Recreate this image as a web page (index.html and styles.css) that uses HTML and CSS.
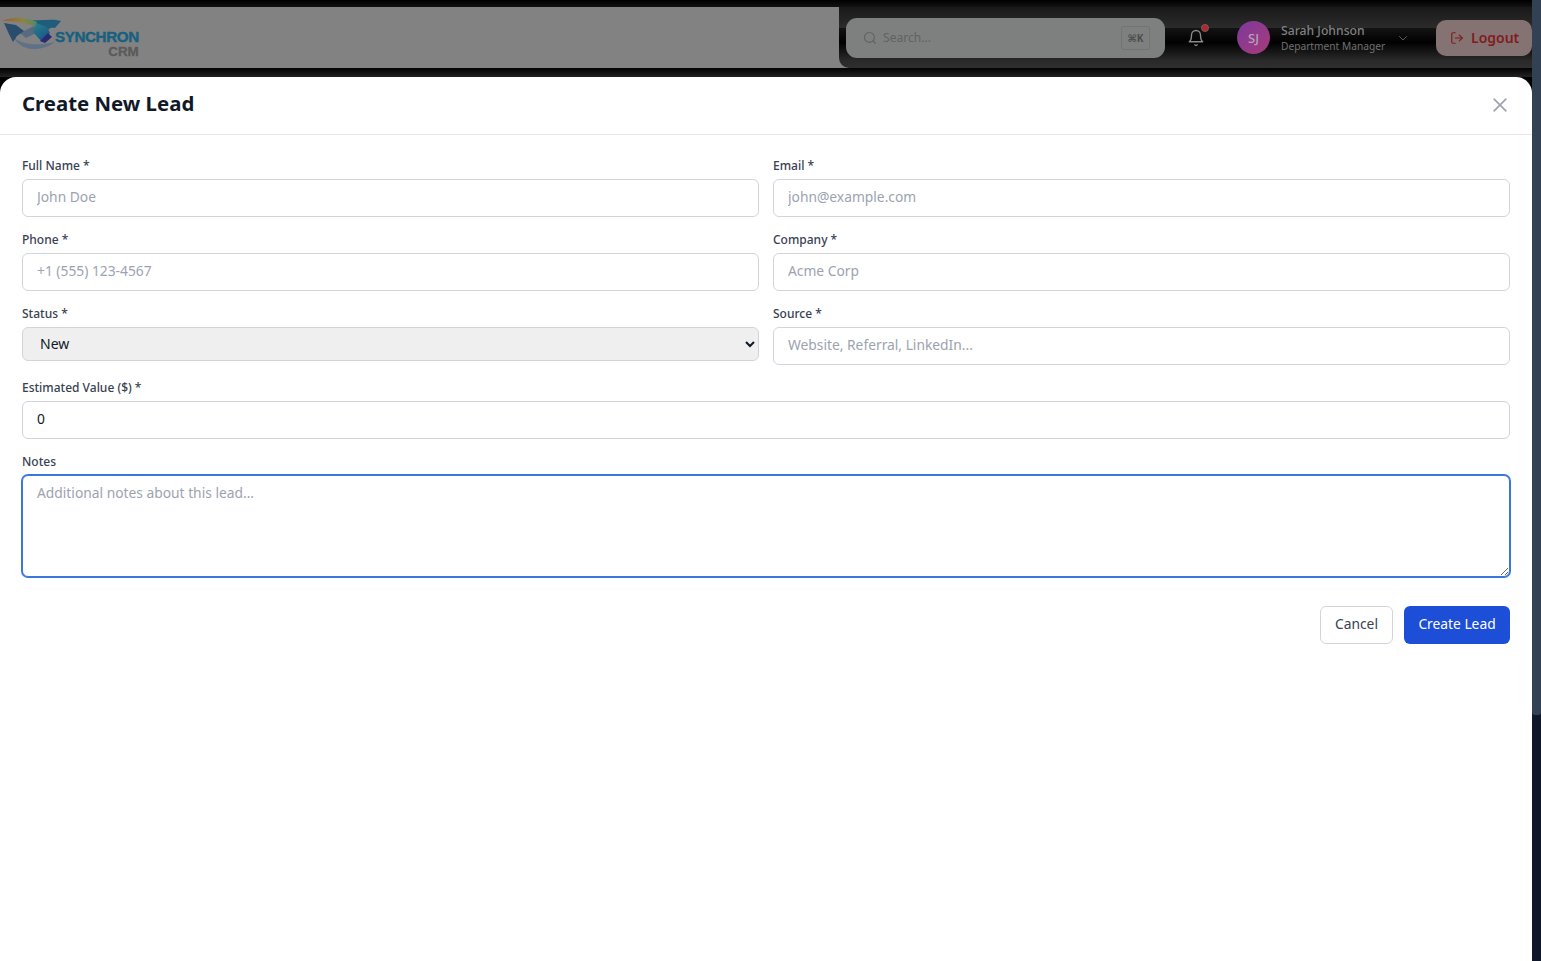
FILE: index.html
```html
<!DOCTYPE html>
<html lang="en">
<head>
<meta charset="utf-8">
<title>Create New Lead</title>
<link rel="stylesheet" href="styles.css">
</head>
<body>
<div class="app">
  <div class="main">
    <div class="strip strip-top"></div>
    <header class="header">
      <div class="brand">
        <svg class="logo-mark" width="62" height="38" viewBox="0 15 62 38">
          <defs>
            <linearGradient id="arc" x1="0" y1="0" x2="1" y2="0">
              <stop offset="0" stop-color="#9a5f2c"/>
              <stop offset="0.6" stop-color="#8c8442"/>
              <stop offset="1" stop-color="#4f8a68"/>
            </linearGradient>
            <linearGradient id="band" x1="0" y1="0" x2="0.6" y2="1">
              <stop offset="0" stop-color="#2f7f8c"/>
              <stop offset="1" stop-color="#15588a"/>
            </linearGradient>
          </defs>
          <path d="M14 38 C24 45 38 46 55 42 C42 52 22 52 14 38Z" fill="#5f7186"/>
          <path d="M20 33 L36 25 L40 31 L26 38Z" fill="#566a82"/>
          <path d="M4 23 L16 25 L24 31 L17 36 L13 42 L8 32Z" fill="#2a4d6e"/>
          <path d="M33 20 C42 21 52 18 61 21 L55 28 C49 27 47 30 48 34 L38 30Z" fill="#1f5d7a"/>
          <path d="M36 23 L47 27 L50 33 L42 42 L33 32Z" fill="url(#band)"/>
          <path d="M48 33 L52 37 L45 43 L40 41Z" fill="#2c2a6e"/>
          <path d="M2 21 C10 17 25 16 37 22 L35 27 C26 22 14 21 2 21Z" fill="url(#arc)"/>
        </svg>
        <div class="wordmark">
          <span class="word-top">SYNCHRON</span>
          <span class="word-bottom">CRM</span>
        </div>
      </div>
      <div class="toolbar">
        <div class="search">
          <svg class="search-icon" width="14" height="14" viewBox="0 0 24 24" fill="none" stroke="#5f6362" stroke-width="2" stroke-linecap="round"><circle cx="11" cy="11" r="8.5"/><path d="M21 21l-3.8-3.8"/></svg>
          <span class="search-text">Search...</span>
          <kbd class="kbd">⌘K</kbd>
        </div>
        <div class="bell">
          <svg width="18" height="18" viewBox="0 0 24 24" fill="none" stroke="#8a8a8a" stroke-width="1.8" stroke-linecap="round" stroke-linejoin="round"><path d="M6 8a6 6 0 0 1 12 0c0 7 3 9 3 9H3s3-2 3-9"/><path d="M10.3 21a2 2 0 0 0 3.4 0"/></svg>
          <span class="dot"></span>
        </div>
        <div class="user">
          <div class="avatar">SJ</div>
          <div class="user-info">
            <span class="user-name">Sarah Johnson</span>
            <span class="user-role">Department Manager</span>
          </div>
          <svg class="chev" width="12" height="12" viewBox="0 0 24 24" fill="none" stroke="#5b5b5b" stroke-width="2" stroke-linecap="round" stroke-linejoin="round"><path d="M5 9l7 7 7-7"/></svg>
        </div>
        <button class="logout" type="button">
          <svg width="14" height="14" viewBox="0 0 24 24" fill="none" stroke="#7f1d1d" stroke-width="2" stroke-linecap="round" stroke-linejoin="round"><path d="M9 21H5a2 2 0 0 1-2-2V5a2 2 0 0 1 2-2h4"/><path d="M16 17l5-5-5-5"/><path d="M21 12H9"/></svg>
          <span>Logout</span>
        </button>
      </div>
    </header>
    <div class="strip strip-bottom"></div>
    <section class="modal">
      <div class="modal-head">
        <h2 class="modal-title">Create New Lead</h2>
        <svg class="close" width="20" height="20" viewBox="0 0 24 24" fill="none" stroke="#9ca3af" stroke-width="2" stroke-linecap="round"><path d="M5 5l14 14M19 5L5 19"/></svg>
      </div>
      <form class="form">
        <div class="grid">
          <label class="field"><span class="label">Full Name *</span><input class="input" placeholder="John Doe"></label>
          <label class="field"><span class="label">Email *</span><input class="input" placeholder="john@example.com"></label>
          <label class="field"><span class="label">Phone *</span><input class="input" placeholder="+1 (555) 123-4567"></label>
          <label class="field"><span class="label">Company *</span><input class="input" placeholder="Acme Corp"></label>
          <label class="field"><span class="label">Status *</span><select class="select"><option>New</option></select></label>
          <label class="field"><span class="label">Source *</span><input class="input" placeholder="Website, Referral, LinkedIn..."></label>
          <label class="field wide"><span class="label">Estimated Value ($) *</span><input class="input" value="0"></label>
          <label class="field wide"><span class="label">Notes</span><textarea class="textarea" placeholder="Additional notes about this lead..."></textarea></label>
        </div>
        <div class="actions">
          <button class="btn btn-cancel" type="button">Cancel</button>
          <button class="btn btn-primary" type="button">Create Lead</button>
        </div>
      </form>
    </section>
  </div>
  <div class="scrollbar"><div class="thumb"></div></div>
</div>
</body>
</html>
```

FILE: styles.css
```css
* { box-sizing: border-box; }
html, body { margin: 0; height: 100%; overflow: hidden; }
body { font-family: "Noto Sans", "Open Sans", sans-serif; color: #111827; background: #000; }
.app { display: flex; height: 961px; }
.main { flex: 1; min-width: 0; display: flex; flex-direction: column; }
.scrollbar { width: 9px; background: #0f172a; }
.thumb { height: 715px; background: #334155; border-radius: 0 0 3px 3px; }
.strip { flex: none; }
.strip-top { height: 7px; background: linear-gradient(#000, #121212); }
.strip-bottom { height: 9px; background: linear-gradient(#020202, #222); }
.header { flex: none; height: 61px; display: flex; background: #828282; }
.brand { width: 839px; flex: none; display: flex; align-items: flex-start; padding-top: 8px; }
.logo-mark { flex: none; }
.wordmark { display: flex; flex-direction: column; align-items: flex-end; margin-left: -7px; margin-top: 15px; font-family: "Liberation Sans", sans-serif; font-weight: 700; line-height: 14px; }
.word-top { font-size: 15.2px; color: #17607f; letter-spacing: -0.4px; -webkit-text-stroke: 0.4px #17607f; }
.word-bottom { font-size: 13.4px; color: #5a5a5a; line-height: 14px; margin-top: 1px; -webkit-text-stroke: 0.3px #5a5a5a; }
.toolbar { flex: 1; min-width: 0; display: flex; align-items: center; padding-left: 7px; border-radius: 0 0 0 10px; background: linear-gradient(#191919 0, #2b2b2b 34%, #131313 35%, #010101 58%, #2a2a2a 88%, #2e2e2e 100%); }
.search { flex: none; width: 319px; height: 40px; display: flex; align-items: center; padding: 0 15px 0 17px; background: #7e807f; border-radius: 11px; }
.search-icon { flex: none; }
.search-text { flex: 1; margin-left: 6px; font-size: 12.1px; color: #5f6362; }
.kbd { width: 29px; height: 24px; display: flex; align-items: center; justify-content: center; border: 1px solid #727473; border-radius: 3px; font-family: "Noto Sans", "DejaVu Sans", sans-serif; font-size: 10px; font-weight: 700; color: #4b4d4c; }
.bell { flex: none; position: relative; width: 18px; height: 18px; margin-left: 22px; }
.dot { position: absolute; top: -5px; right: -4px; width: 8px; height: 8px; border-radius: 50%; background: #b0282c; border: 1px solid #7d5a5a; }
.user { flex: none; display: flex; align-items: center; margin-left: 32px; }
.avatar { width: 33px; height: 33px; border-radius: 50%; background: linear-gradient(135deg, #7c3a9e, #a83a78); color: #b5a4b8; font-size: 13px; font-weight: 500; display: flex; align-items: center; justify-content: center; }
.user-info { display: flex; flex-direction: column; margin: 2px 0 0 11px; white-space: nowrap; }
.user-name { font-size: 12.2px; line-height: 16px; font-weight: 500; color: #808080; }
.user-role { font-size: 10.2px; line-height: 15px; color: #707070; }
.chev { margin-left: 12px; }
.logout { margin-left: auto; flex: none; width: 96px; height: 36px; display: flex; align-items: center; gap: 7px; padding: 0 0 0 14px; border: 0; border-radius: 10px; background: #857373; color: #7f1d1d; font: 600 14px "Noto Sans", sans-serif; white-space: nowrap; }
.modal { flex: 1; background: #fff; border-radius: 16px 16px 0 0; }
.modal-head { height: 58px; display: flex; align-items: center; justify-content: space-between; padding: 0 22px; border-bottom: 1px solid #e5e7eb; }
.modal-title { margin: 0 0 6px; font-size: 20.4px; font-weight: 700; color: #111827; line-height: 50px; }
.close { margin-right: 0; margin-bottom: 1px; }
.form { padding: 22px 22px 0; }
.grid { display: grid; grid-template-columns: 1fr 1fr; column-gap: 14px; row-gap: 14px; }
.field { display: flex; flex-direction: column; }
.wide { grid-column: 1 / -1; }
.label { font-size: 12px; line-height: 18px; font-weight: 500; color: #374151; margin-bottom: 4px; }
.input, .textarea { width: 100%; border: 1px solid #d1d5db; border-radius: 6px; font: 13.8px "Noto Sans", sans-serif; color: #111827; background: #fff; outline: 0; }
.input { height: 38px; padding: 0 14px 3px; }
.input::placeholder, .textarea::placeholder { color: #9ca3af; opacity: 1; }
.textarea { height: 102px; padding: 7px 14px; border-color: #3b76e0; box-shadow: 0 0 0 1px #3b76e0; display: block; resize: vertical; }
.select { width: 100%; height: 34px; border: 1px solid #d1d5db; border-radius: 6px; padding: 0 13px 2px; font: 14px "Noto Sans", sans-serif; color: #111827; background-color: #efefef; }
.actions { display: flex; justify-content: flex-end; gap: 11px; margin-top: 29px; }
.btn { height: 38px; border-radius: 6px; font: 13.8px "Noto Sans", sans-serif; padding: 0 0 3px; }
.btn-cancel { width: 73px; background: #fff; border: 1px solid #d1d5db; color: #374151; }
.btn-primary { width: 106px; background: #1d4ed8; border: 0; color: #fff; }
```
